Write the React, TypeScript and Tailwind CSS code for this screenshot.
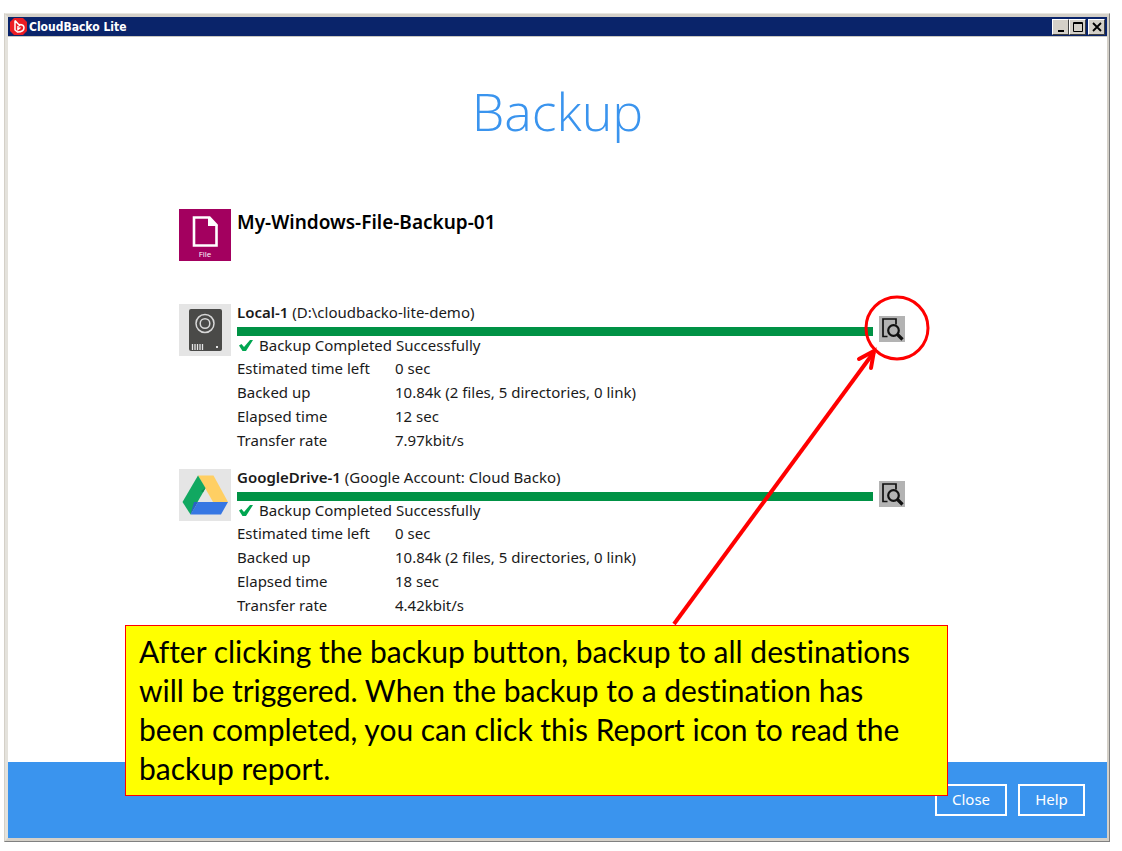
import type { ReactNode } from 'react'

interface Destination {
  id: string
  name: string
  location: string
  icon: ReactNode
  stats: { label: string; value: string }[]
}

const DESTINATIONS: Destination[] = [
  {
    id: 'local',
    name: 'Local-1',
    location: '(D:\\cloudbacko-lite-demo)',
    icon: <DriveIcon />,
    stats: [
      { label: 'Estimated time left', value: '0 sec' },
      { label: 'Backed up',           value: '10.84k (2 files, 5 directories, 0 link)' },
      { label: 'Elapsed time',        value: '12 sec' },
      { label: 'Transfer rate',       value: '7.97kbit/s' },
    ],
  },
  {
    id: 'google',
    name: 'GoogleDrive-1',
    location: '(Google Account: Cloud Backo)',
    icon: <GoogleDriveIcon />,
    stats: [
      { label: 'Estimated time left', value: '0 sec' },
      { label: 'Backed up',           value: '10.84k (2 files, 5 directories, 0 link)' },
      { label: 'Elapsed time',        value: '18 sec' },
      { label: 'Transfer rate',       value: '4.42kbit/s' },
    ],
  },
]

function AppLogo() {
  return (
    <svg className="w-[17px] h-[17px]" viewBox="0 0 17 17" fill="none">
      <path d="M4 0h9l4 4v9l-4 4H4l-4-4V4z" fill="#ec1c24" />
      <path d="M5 2.5v9.5l2.5 2c4 0 6.500-1.500 6.500-4.200S11.500 6.500 9.500 6.500M5 2.500l5 5.500M8 8v3.500l2.500-2" stroke="#fff" strokeWidth="1.500" />
    </svg>
  )
}

function FileIcon() {
  return (
    <svg className="w-[52px] h-[52px] shrink-0" viewBox="0 0 52 52">
      <rect width="52" height="52" fill="#a3005f" />
      <path d="M15 8.500h15.500l7 7.500v20.500H15z" fill="none" stroke="#fff" strokeWidth="2.600" />
      <path d="M29 8v9h10z" fill="#fff" />
      <text x="26" y="48" textAnchor="middle" fontSize="8" fontFamily="Open Sans, sans-serif" fill="#fff">File</text>
    </svg>
  )
}

function DriveIcon() {
  return (
    <svg className="w-[52px] h-[52px]" viewBox="0 0 52 52" fill="none">
      <rect width="52" height="52" fill="#e5e5e5" />
      <rect x="10" y="5" width="33" height="42" rx="2" fill="#4a4a48" />
      <circle cx="26" cy="19.500" r="9" stroke="#d8d8d8" strokeWidth="1.500" />
      <circle cx="26" cy="19.500" r="4.800" stroke="#d8d8d8" strokeWidth="1.500" />
      <path d="M13.500 40v6M16 40v6M18.500 40v6M21 40v6M23.500 40v6" stroke="#e5e5e5" strokeWidth="1.300" />
      <rect x="37" y="42" width="2" height="2" fill="#e5e5e5" />
    </svg>
  )
}

function GoogleDriveIcon() {
  return (
    <svg className="w-[52px] h-[52px]" viewBox="0 0 52 52">
      <rect width="52" height="52" fill="#e5e5e5" />
      <path d="M19 6.500h15.500L49 33H34z" fill="#ffcf63" />
      <path d="M19 6.500L3.500 33l8 12.500L26.500 19z" fill="#11a861" />
      <path d="M19 33h30l-7 12.500H11.500z" fill="#3777e3" />
      <path d="M26.500 19l-4.500 3 2 1.500z" fill="#0b8a4c" />
      <path d="M19 33l-7.500 12.500L15 33z" fill="#2a63c4" />
    </svg>
  )
}

function ReportIcon() {
  return (
    <svg className="w-[26px] h-[26px]" viewBox="0 0 26 26" fill="none" stroke="#111">
      <path d="M8.500 20.500H4V3h13v5.500" strokeWidth="1.700" />
      <circle cx="14.500" cy="14.500" r="5.300" strokeWidth="2.200" />
      <path d="M18.500 18.500l5 5" strokeWidth="3.200" />
    </svg>
  )
}

function CheckIcon() {
  return (
    <svg className="w-[14px] h-[12px]" viewBox="0 0 14 12">
      <path d="M0 6.500l2.500-1.500L5 8 11 1h3L7 12H3.500z" fill="#00a651" />
    </svg>
  )
}

function DestinationRow({ destination }: { destination: Destination }) {
  return (
    <section className="flex items-start gap-[6px]">
      <div className="shrink-0">{destination.icon}</div>
      <div className="flex-1 min-w-0">
        <div className="flex items-center gap-[6px]">
          <div className="flex-1">
            <h3 className="font-normal leading-[23px] -mt-[3px] pb-[3px]">
              <span className="font-semibold">{destination.name}</span> {destination.location}
            </h3>
            <div role="progressbar" aria-valuenow={100} aria-label={destination.name} className="h-[9px] bg-[#009245]" />
          </div>
          <button type="button" aria-label={`${destination.name} report`} className="bg-[#b3b3b3] mt-[9px] -mb-[9px]">
            <ReportIcon />
          </button>
        </div>
        <p className="flex items-center gap-[6px] pl-[2px] mb-[2px] h-[18px]">
          <CheckIcon />
          Backup Completed Successfully
        </p>
        <table className="leading-6">
          <tbody>
            {destination.stats.map(s => (
              <tr key={s.label}>
                <th scope="row" className="w-[158px] p-0 text-left font-normal">{s.label}</th>
                <td className="p-0">{s.value}</td>
              </tr>
            ))}
          </tbody>
        </table>
      </div>
    </section>
  )
}

function TitleBar() {
  const button = 'flex items-center justify-center w-[17px] h-4 bg-[#d4d0c8] border border-t-white border-l-white border-r-[#404040] border-b-[#404040]'
  return (
    <header className="flex items-center h-5 px-[2px] bg-[#0a246a] border-b border-[#c9c7c0]">
      <AppLogo />
      <span className="flex-1 pl-[2px] text-xs font-bold text-white font-['DejaVu_Sans_Condensed','DejaVu_Sans',sans-serif]">CloudBacko Lite</span>
      <button type="button" aria-label="Minimize" className={button}>
        <svg className="w-3 h-3" viewBox="0 0 12 12"><path d="M3 9h6v2H3z" /></svg>
      </button>
      <button type="button" aria-label="Maximize" className={button}>
        <svg className="w-3 h-3" viewBox="0 0 12 12" fill="none" stroke="#000"><path d="M1.500 1.500h9v9h-9zM1 2.500h10" /></svg>
      </button>
      <button type="button" aria-label="Close window" className={`${button} ml-[2px]`}>
        <svg className="w-3 h-3" viewBox="0 0 12 12" fill="none" stroke="#000" strokeWidth="1.800"><path d="M2 2l8 8M10 2l-8 8" /></svg>
      </button>
    </header>
  )
}

export default function App() {
  return (
    <div className="min-h-screen flex bg-white pt-[13px] pl-1 pr-3 pb-[9px] font-['Noto_Sans',sans-serif] text-[15px] text-[#1a1a1a]">
      {/* Window frame */}
      <div className="flex-1 flex border border-t-[#e8e6e0] border-l-[#d4d0c8] border-r-[#808080] border-b-[#808080]">
        <div className="relative flex-1 flex flex-col border-3 border-r-2 border-t-[#d4d0c8] border-l-[#e4e2dc] border-r-[#d4d0c8] border-b-[#d4d0c8]">
          <TitleBar />

          <main className="flex-1 pb-8">
            <h1 className="pt-[38px] text-center text-[52px] leading-[72px] font-light text-[#3a94ee] font-['Open_Sans',sans-serif]">Backup</h1>

            <div className="pl-[171px] pr-[202px] pt-[62px]">
              <div className="flex items-start gap-[6px] mb-[43px]">
                <FileIcon />
                <h2 className="text-[19px] leading-[26px] font-semibold text-black">My-Windows-File-Backup-01</h2>
              </div>
              <div className="flex flex-col gap-[17px]">
                {DESTINATIONS.map(d => (
                  <DestinationRow key={d.id} destination={d} />
                ))}
              </div>
            </div>
          </main>

          <footer className="flex items-start justify-end gap-[11px] h-[76px] pt-[22px] pr-[22px] bg-[#3a94ee] text-white">
            <button type="button" className="h-8 w-[72px] pb-[2px] border-2 border-white">Close</button>
            <button type="button" className="h-8 w-[67px] pb-[2px] border-2 border-white">Help</button>
          </footer>

          {/* Callout */}
          <svg className="absolute left-[660px] top-[270px] w-[280px] h-[340px] pointer-events-none" viewBox="0 0 280 340" fill="none" stroke="#f00">
            <circle cx="229" cy="41" r="31" strokeWidth="3" />
            <path d="M6 337L206 65" strokeWidth="4" />
            <path d="M191 72l15-8-3 17" strokeWidth="4" strokeLinecap="round" />
          </svg>
          <div className="absolute left-[117px] bottom-[42px] w-[823px] px-[13px] pt-[6px] pb-[7px] bg-[#ff0] border border-[#f00]">
            <p className="font-[Lato,sans-serif] text-[30px] leading-[39px] text-black [font-variant-ligatures:none]">
              After clicking the backup button, backup to all destinations will be triggered. When the backup to a destination has been completed, you can click this Report icon to read the backup report.
            </p>
          </div>
        </div>
      </div>
    </div>
  )
}
